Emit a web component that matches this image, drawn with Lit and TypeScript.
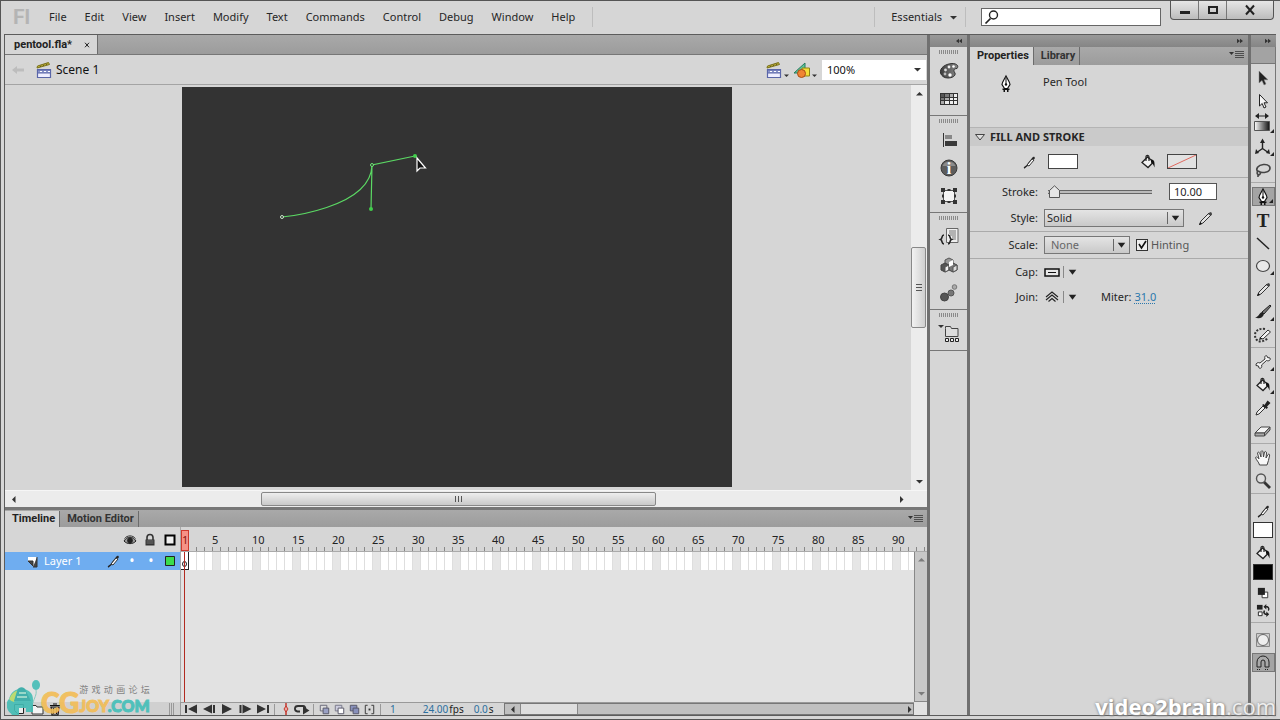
import { LitElement, html, svg, css, TemplateResult } from "lit";
import { customElement } from "lit/decorators.js";

type Shape = ReturnType<typeof svg>;

const PENCIL = svg`<path d="M2.5 14.5 4 11 12 3l2.5 1.5L6 13Z" fill="#e4e4e4" stroke="#333"/><path d="m11 4 3 2 1-3-1.5-1Z" fill="#444"/><path d="m2 15 1.5-3 1.5 2Z" fill="#111"/>`;
const THIN_PENCIL = svg`<path d="M3 14c2-1 4-3 5-5l4-5" fill="none" stroke="#222" stroke-width="1.4"/><path d="M6 11l5-6 2 1-5 6Z" fill="#fff" stroke="#222" stroke-width=".9"/><path d="m11 4 2-1.500 1 1.500-1 1.500Z" fill="#222"/>`;
const BUCKET = svg`<path d="M2 8.500 7.500 3l6 5-5.500 5.500Z" fill="#f2f2f2" stroke="#222" stroke-width="1.300"/><path d="M6 7V2.500C6 1 9 1 9 3v4" fill="none" stroke="#222" stroke-width="1.200"/><path d="M11 5.500c3-.5 4 3 3.500 8-1-2-1-4-3.500-5Z" fill="#111"/>`;
const NIB = svg`<path d="M8 0C6 4 4 6.500 4 8.500L6.500 12.500h3L12 8.500C12 6.500 10 4 8 0Z" fill="#fff" stroke="#111" stroke-width="1.200"/><path d="M8 2v6" stroke="#111"/><circle cx="8" cy="8.500" r="1.200" fill="#111"/><path d="M4.500 12.500h7V14h-1v2h-1.500v-2h-2v2H5.500v-2h-1Z" fill="#111"/>`;
const CLAP = svg`<path d="M1.500 7.500h13v8h-13Z" fill="#eef" stroke="#5a66a8" stroke-width="1.200"/><path d="M1.500 8h13v3h-13Z" fill="#8c96cc" stroke="#5a66a8"/><path d="m4 9.500h2m2 0h2m2 0h2" stroke="#fff"/><path d="m1 6 .5-2 11-3.500 1 2Z" fill="#c8b840" stroke="#77701a"/><path d="m4 5 1-1.500m2 .5 1-1.500m2 .5 1-1.500" stroke="#5d5710"/>`;

const ICONS: Record<string, Shape> = {
  pencil: PENCIL,
  thinPencil: THIN_PENCIL,
  bucket: BUCKET,
  nib: NIB,
  clap: CLAP,
  back: svg`<path d="m2 8 5-4v2.500h7v3H7V12Z" fill="#bdbdbd"/>`,
  symbols: svg`<path d="m0 11 11-10v10Z" fill="#5cc49c" stroke="#287a5c"/><path d="M8 6h7.500v8H8Z" fill="#f4de38" stroke="#8f8414"/><circle cx="7.500" cy="11.500" r="4" fill="#f08432" stroke="#a84c14"/>`,
  search: svg`<circle cx="9.500" cy="6" r="4" fill="none" stroke="#222" stroke-width="1.400"/><path d="m6.500 9.500-5 5" stroke="#222" stroke-width="1.700"/>`,
  palette: svg`<defs><linearGradient id="p"><stop offset="0" stop-color="#3c3c3c"/><stop offset="1" stop-color="#888"/></linearGradient></defs><path d="M-.5 10C-1.500 5 4 1 11 .5c5 0 7 2.500 5 5-3 0-4 2-2 4.500 1 3-3 5-7 5s-6.500-2-7.500-5Z" fill="url(#p)" stroke="#333"/><circle cx="4.500" cy="7" r="1.400" fill="#ddd"/><circle cx="8" cy="4" r="1.400" fill="#eee"/><circle cx="12.500" cy="3.500" r="1.300" fill="#fff"/><circle cx="4" cy="11" r="1.400" fill="#bbb"/><circle cx="9" cy="12" r="1.700" fill="#fff"/>`,
  swatches: svg`<path d="M-1 2h18v12H-1Z" fill="#333"/><path d="M0 3h3v3H0Z" fill="#555"/><path d="M4 3h4v3H4ZM0 7h3v2H0Z" fill="#777"/><path d="M9 3h3v3H9ZM4 7h4v2H4ZM0 10h3v3H0Z" fill="#aaa"/><path d="M13 3h3v3h-3ZM9 7h3v2H9ZM4 10h4v3H4ZM13 7h3v2h-3ZM9 10h3v3H9ZM13 10h3v3h-3Z" fill="#eee"/>`,
  align: svg`<path d="M2.500 1v14" stroke="#333"/><path d="M4 3h7v4H4Z" fill="#888"/><path d="M4 9h12v5H4Z" fill="#3a3a3a"/>`,
  info: svg`<circle cx="8" cy="8" r="8" fill="#5c5c5c" stroke="#3a3a3a"/><path d="M1.500 6a6.800 6 0 0 1 13 0Z" fill="#8b8b8b"/><text x="8" y="13.500" text-anchor="middle" font-family="Liberation Serif, serif" font-weight="bold" font-size="16" fill="#fff">i</text>`,
  transform: svg`<path d="M2.500 2.500h11v11h-11Z" fill="#f4f4f4" stroke="#555"/><path d="M0 0h4v4H0ZM12 0h4v4h-4ZM0 12h4v4H0ZM12 12h4v4h-4ZM6.500 1h3v2h-3ZM6.500 13h3v2h-3ZM1 6.500h2v3H1ZM13 6.500h2v3h-2Z" fill="#333"/>`,
  code: svg`<path d="M5.500-.5H17v14H5.500Z" fill="#eee" stroke="#666"/><path d="M8 2h7M8 4h7M9 6h6M11 8h4M11 10h4" stroke="#777"/><path d="M3 6C0 6 2 9.500-.5 10.500 2 11.500 0 15 3 15M7 6c3 0 1 3.500 3.500 4.500C8 11.500 10 15 7 15" fill="none" stroke="#222" stroke-width="1.600"/>`,
  components: svg`<path d="m4 3 4-2 4 2v5l-4 2-4-2Z" fill="#999" stroke="#555"/><path d="m0 8 4-2 4 2v5l-4 2-4-2Z" fill="#555" stroke="#444"/><path d="M4 10v5l4-2V8Z" fill="#f2f2f2" stroke="#555"/><path d="m8 8 4-2 4 2v5l-4 2-4-2Z" fill="#777" stroke="#444"/><path d="M12 10v5l4-2V8Z" fill="#ddd" stroke="#555"/><path d="M8 5v5l4-2V3Z" fill="#fff"/>`,
  motion: svg`<circle cx="3.500" cy="12" r="4" fill="#555" stroke="#444"/><circle cx="10" cy="8" r="3" fill="#777" stroke="#555"/><circle cx="13.500" cy="2" r="2.300" fill="#aaa" stroke="#777"/>`,
  project: svg`<path d="m-3-1h6L0 2Z" fill="#333"/><path d="M4.500 2.500V.5h5l1 2H17v8H4.500Z" fill="#ddd" stroke="#444"/><path d="M4.500 12.500h3v3h-3ZM9.500 12.500h3v3h-3ZM14.500 12.500h3v3h-3Z" fill="#eee" stroke="#222"/>`,
  select: svg`<path d="M4 1v12l3-2.500L9 15l2-1-2-4.200h4Z" fill="#222" stroke="#888" stroke-width=".5"/>`,
  subselect: svg`<path d="M4.500 1.500V13l2.700-2.500L9 15l2-1-2-4.200h3.500Z" fill="#f6f6f6" stroke="#222"/>`,
  gradient: svg`<defs><linearGradient id="g"><stop offset="0" stop-color="#fff"/><stop offset="1" stop-color="#111"/></linearGradient></defs><path d="M1 0h12" stroke="#222"/><path d="M4-3v6L0 0ZM10-3v6l4-3Z" fill="#222"/><path d="M-.5 5.500h15v9h-15Z" fill="url(#g)" stroke="#555"/>`,
  axes: svg`<path d="M7.500 10V3M7.500 9.500 2.500 13M7.500 9.500l5 3.500" stroke="#222" stroke-width="1.400"/><path d="M7.500-.5 5 4h5ZM0 15l1-5 3 4ZM15 15l-1-5-3 4Z" fill="#222"/>`,
  lasso: svg`<path d="M3 10C0 7 3 3 8.500 2.500S16 5 14.500 8 6 11 4 9.500s-2.500 2-1 3 3-1 2-2M3 12v3" fill="none" stroke="#444" stroke-width="1.600"/>`,
  text: svg`<text x="8" y="14.500" text-anchor="middle" font-family="Liberation Serif, serif" font-weight="bold" font-size="19" fill="#222">T</text>`,
  line: svg`<path d="m2 3 12 11" stroke="#222" stroke-width="1.500"/>`,
  oval: svg`<ellipse cx="8" cy="8" rx="6.500" ry="5.500" fill="#eaeaea" stroke="#444" stroke-width="1.200"/>`,
  brush: svg`<path d="M7 8 15 1l1 1-7 8Z" fill="#777" stroke="#222"/><path d="M9 10C8 14 4 15 0 13.500 4 13 4 9 7 8Z" fill="#222"/>`,
  deco: svg`<path d="M5 11 13 3l2.500 2-7.500 7Z" fill="#f4f4f4" stroke="#333"/><path d="m4 13 1-3 2.500 2Z" fill="#222"/><path d="M10 2C4 1 0 4 0 8s2 5 3 6c3 1 7 0 10-3" fill="none" stroke="#333" stroke-width="2" stroke-dasharray="2 1.500"/>`,
  bone: svg`<path d="M5 9 10 5c-1-3 1-4 2-3l.5 1.500L15 4c1 2-1 3.500-3.500 2.500l-5 4.500c1 2.500-1 4-2.500 3l-.5-2L1 11.500C.5 9 3 8 5 9Z" fill="#f4f4f4" stroke="#333"/>`,
  dropper: svg`<path d="m1 15 1-3 6-6 2 2-6 6Z" fill="#eee" stroke="#333"/><path d="m7 5 1.500-1 1 1 3-4.500 3 2.500L12 6.500l1 1L11.500 9Z" fill="#222"/>`,
  eraser: svg`<path d="m0 10 6-6h9l-5.500 6Z" fill="#f4f4f4" stroke="#444"/><path d="M0 10v3h9.500v-3ZM9.500 10v3L15 7V4Z" fill="#aaa" stroke="#444"/>`,
  hand: svg`<path d="M4.500 15C4 12 1 10 .5 7.500 1.500 6 3 8 4 9L2.500 3C3 1.500 4.500 2 5 4l1 3V1.500c.5-1 2-1 2 .5l.5 5 1-5c.5-1 2-.5 2 1L11 8l2-3.500c1-1 2 0 1.500 1.500C14 9 13 12 12 15Z" fill="#f8f8f8" stroke="#444"/>`,
  magnify: svg`<path d="m9 9 6 6" stroke="#333" stroke-width="2.800"/><circle cx="6" cy="5.500" r="4.500" fill="#ddd" stroke="#555" stroke-width="1.400"/>`,
  blackwhite: svg`<path d="M6.500 6.500h6v6h-6Z" fill="#fff" stroke="#333"/><path d="M2 2h7.500v7.500H2Z" fill="#222"/>`,
  swap: svg`<path d="M1 2h6v5H1Z" fill="#222"/><path d="M2.500 9.500h4v4h-4Z" fill="#fff" stroke="#222"/><path d="M9 4h3c2 1 2 3 1 4M13 12h-3c-2-1-2-2-1-4" fill="none" stroke="#222" stroke-width="1.500"/><path d="M11 1v6L8 4ZM11 9v6l3-3Z" fill="#222"/>`,
  objectDraw: svg`<path d="M1.500 1.500h13v13h-13Z" fill="#ccc" stroke="#888"/><circle cx="8" cy="8" r="5.500" fill="#eee" stroke="#666"/>`,
  magnet: svg`<path d="M2 12V7a6 6 0 0 1 12 0v5h-4V7a2 2 0 0 0-4 0v5Z" fill="#aaa" stroke="#222"/><path d="M2 14.500h4M10 14.500h4" stroke="#222" stroke-dasharray="1 1"/>`,
  eye: svg`<path d="M2 9C5 4 11 4 14 9 11 12.500 5 12.500 2 9Z" fill="#999" stroke="#222"/><circle cx="8" cy="8.500" r="2.800" fill="#222"/><path d="M2.500 6.500c3-3.500 8-3.500 11 0" fill="none" stroke="#333"/>`,
  lock: svg`<path d="M5 8V5.500a3 3 0 0 1 6 0V8" fill="none" stroke="#333" stroke-width="1.600"/><path d="M3.500 7.500h9v6h-9Z" fill="#333"/><path d="M4.500 9h7M4.500 11h7" stroke="#777"/>`,
  outline: svg`<path d="M3.500 3.500h9v9h-9Z" fill="#eee" stroke="#000" stroke-width="2"/>`,
  layer: svg`<path d="M4 4h9v9H9V8H4Z" fill="#fff"/><path d="M4 8h5v5ZM13 4v10H9" fill="#444" stroke="#333"/>`,
  green: svg`<path d="M3.500 3.500h9v9h-9Z" fill="#3bdc4b" stroke="#222"/>`,
  newLayer: svg`<path d="M3.500 3.500h9v9h-6l-3-3Z" fill="#eee" stroke="#222"/>`,
  folder: svg`<path d="M3 4.500h4l1 1.500h6v7H3Z" fill="#f4f4f4" stroke="#333"/>`,
  trash: svg`<path d="M4 6h8l-1 8H5ZM3 4.500h10M6 3h4" fill="#aaa" stroke="#111" stroke-width="1.200"/><path d="M6.500 7v6M9.500 7v6" stroke="#111"/>`,
  first: svg`<path d="M3 4v8" stroke="#333" stroke-width="2"/><path d="M14 3.500v9L5 8Z" fill="#333"/>`,
  prev: svg`<path d="M13 4v8" stroke="#333" stroke-width="2"/><path d="M11 3.500v9L2 8Z" fill="#333"/>`,
  play: svg`<path d="M3 3v10l10-5Z" fill="#333"/>`,
  next: svg`<path d="M3.500 4v8" stroke="#333" stroke-width="2"/><path d="M5.500 3.500v9l9-4.500Z" fill="#333"/>`,
  last: svg`<path d="M13 4v8" stroke="#333" stroke-width="2"/><path d="M2 3.500v9L11 8Z" fill="#333"/>`,
  center: svg`<path d="M8 2v12" stroke="#c3352b" stroke-width="1.500"/><path d="m8 5 2 3-2 3-2-3Z" fill="#e9a59f" stroke="#c3352b"/>`,
  loop: svg`<path d="M6 10.500H3.500C0 10 0 5 4 5h5c2 0 2.500 2 2.500 4" fill="none" stroke="#333" stroke-width="1.800"/><path d="M9 5.500v8l6.500-4Z" fill="#333"/>`,
  onion: svg`<path d="M3.500 3.500h7v6h-7Z" fill="#ddd" stroke="#667"/><path d="M6.500 6.500h6v6h-6Z" fill="#99a0c4" stroke="#556"/>`,
  onionOutline: svg`<path d="M3.500 3.500h7v6h-7Z" fill="#ccd" stroke="#778"/><path d="M6.500 6.500h6v6h-6Z" fill="#fff" stroke="#556"/>`,
  multi: svg`<path d="M3.500 3.500h7v6h-7Z" fill="#8890bb" stroke="#556"/><path d="M6.500 6.500h6v6h-6Z" fill="#8890bb" stroke="#556"/>`,
  markers: svg`<path d="M6 3.500H3.500v9H6M10 3.500h2.500v9H10" fill="none" stroke="#333"/><path d="M7 8h2" stroke="#333" stroke-width="2"/>`,
  cap: svg`<path d="M1 5h14v7H1Z" fill="#e8e8e8" stroke="#111" stroke-width="1.500"/><path d="M4 8.500h8" stroke="#111"/>`,
  join: svg`<path d="m2 8 6-5 6 5M2 11l6-5 6 5M4.500 12.500 8 9.500l3.500 3" fill="none" stroke="#222" stroke-width="1.100"/>`,
  down: svg`<path d="M3 5h10l-5 6.500Z" fill="#222"/>`,
  menu: svg`<path d="M0 5h5L2.500 8Z" fill="#333"/><path d="M6 4.500h9M6 6.500h9M6 8.500h9M6 10.500h9" stroke="#444" stroke-width=".9"/>`,
  toLeft: svg`<path d="M8 5v6L4 8ZM12 5v6L8 8Z" fill="#333"/>`,
  toRight: svg`<path d="M4 5v6l4-3ZM8 5v6l4-3Z" fill="#333"/>`,
  minimize: svg`<path d="M3 9h10v3H3Z" fill="#222"/>`,
  maximize: svg`<path d="M4 5h8v6H4Z" fill="none" stroke="#222" stroke-width="2"/>`,
  close: svg`<path d="m4 3.500 8 9M12 3.500l-8 9" stroke="#222" stroke-width="2"/>`,
};

const icon = (name: string, size = 16): TemplateResult =>
  html`<svg width=${size} height=${size} viewBox="0 0 16 16" overflow="visible" aria-hidden="true">${ICONS[name]}</svg>`;

const arrow = (d: string) => html`<svg width="7" height="7" viewBox="0 0 7 7" aria-hidden="true"><path d=${d} fill="#333" /></svg>`;
const UP = "M0 5.500h7L3.500 2Z";
const DOWN = "M0 2h7L3.500 5.500Z";
const LEFT = "M5.500 0v7L2 3.500Z";
const RIGHT = "M2 0v7l3.500-3.500Z";

const base = css`
  :host { box-sizing: border-box; font: 11px/16px "Noto Sans", "Open Sans", sans-serif; color: #262626; }
  *, *::before, *::after { box-sizing: border-box; }
  svg { display: block; flex: none; }
  button { font: inherit; color: inherit; border: 0; padding: 0; background: none; display: inline-flex; align-items: center; justify-content: center; white-space: nowrap; }
  input, select { font: inherit; color: inherit; margin: 0; border-radius: 0; }
  .tabs { display: flex; background: linear-gradient(#a9a9a9, #9c9c9c); }
  .tab { font: bold 11px/16px Roboto, sans-serif; color: #333; padding: 0 4px 0 7px; border-right: 1px solid #6c6c6c; }
  .tab.on { background: #d6d6d6; color: #222; }
  .spacer { flex: 1; }
`;

@customElement("menu-bar")
class MenuBar extends LitElement {
  static styles = [base, css`
    :host { display: flex; align-items: center; height: 34px; padding-left: 9px; }
    .logo { font: bold 21px/24px Roboto, sans-serif; color: #b4b4b4; width: 27px; }
    nav { display: flex; align-items: center; margin-right: 8px; }
    .item { padding: 0 9px; }
    .rule { width: 1px; height: 20px; background: #bdbdbd; }
    .space { gap: 8px; margin: 0 8px 0 16px; }
    .search { display: flex; align-items: center; width: 180px; height: 18px; margin: 0 9px 0 15px; border: 1px solid #666; background: #fff; padding-left: 2px; }
    .search input { border: 0; outline: 0; background: none; flex: 1; min-width: 0; }
    .window { display: flex; align-self: flex-start; margin-right: 2px; height: 20px; border: 1px solid #555; border-top: 0; border-radius: 0 0 4px 4px; background: linear-gradient(#e8e8e8, #bcbcbc); }
    .window button { width: 28px; border-right: 1px solid #777; }
    .window .close { width: 46px; border: 0; }
  `];
  render() {
    return html`
      <span class="logo">Fl</span>
      <nav>${["File", "Edit", "View", "Insert", "Modify", "Text", "Commands", "Control", "Debug", "Window", "Help"].map((m) => html`<button class="item">${m}</button>`)}</nav>
      <span class="rule"></span><span class="spacer"></span><span class="rule"></span>
      <button class="space">Essentials ${arrow(DOWN)}</button><span class="rule"></span>
      <label class="search">${icon("search")}<input type="text" aria-label="Search" /></label>
      <div class="window">
        <button aria-label="Minimize">${icon("minimize")}</button>
        <button aria-label="Maximize">${icon("maximize")}</button>
        <button class="close" aria-label="Close">${icon("close")}</button>
      </div>`;
  }
}

@customElement("stage-view")
class StageView extends LitElement {
  static styles = [base, css`
    :host { display: flex; flex-direction: column; min-height: 0; }
    .tabs { flex: none; height: 20px; border-bottom: 1px solid #777; }
    .tab { display: flex; gap: 11px; align-items: center; padding: 0 6px 0 9px; }
    .tab svg { width: 8px; }
    .edit { flex: none; display: flex; align-items: center; height: 30px; padding-left: 5px; border-bottom: 1px solid #a4a4a4; }
    .scene { display: flex; gap: 4px; align-items: center; margin-left: 10px; font-size: 12px; color: #111; }
    .pop { gap: 2px; margin-right: 5px; align-items: flex-end; }
    .pop svg + svg { width: 5px; height: 5px; }
    .zoom { display: flex; align-items: center; width: 104px; height: 20px; background: #fff; margin-right: 1px; padding-right: 5px; }
    .zoom select { appearance: none; border: 0; background: none; flex: 1; padding-left: 5px; color: #111; outline: 0; }
    .area { flex: 1; min-height: 0; display: grid; grid-template-columns: minmax(0, 1fr) 16px; grid-template-rows: minmax(0, 1fr) 17px; }
    .canvas { display: flex; justify-content: center; align-items: center; overflow: hidden; padding: 0 2px 2px 0; }
    .canvas svg { background: #333; }
    .vbar, .hbar { display: flex; align-items: center; background: #ececec; }
    .vbar { flex-direction: column; padding: 5px 0; }
    .hbar { grid-column: 1 / 3; padding: 0 22px 0 5px; border-top: 1px solid #f6f6f6; }
    .track { flex: 1; display: flex; align-self: stretch; }
    .vbar .track { flex-direction: column; }
    .before, .after { flex: 150 1 0; }
    .hbar .before { flex-grow: 244; } .hbar .after { flex-grow: 242; }
    .thumb { display: flex; align-items: center; justify-content: center; border: 1px solid #888; border-radius: 2px; background: linear-gradient(90deg, #f2f2f2, #cfcfcf); }
    .vbar .thumb { flex: 80 1 0; margin: 0 1px 0 0; }
    .hbar .thumb { flex: 394 1 0; margin: 1px 0; background: linear-gradient(#eee, #c9c9c9); }
  `];
  render() {
    return html`
      <div class="tabs"><button class="tab on">pentool.fla* ${icon("close")}</button></div>
      <div class="edit">
        <button aria-label="Back">${icon("back")}</button>
        <span class="scene">${icon("clap")}Scene 1</span><span class="spacer"></span>
        <button class="pop" aria-label="Edit scene">${icon("clap")}${arrow(DOWN)}</button>
        <button class="pop" aria-label="Edit symbols">${icon("symbols")}${arrow(DOWN)}</button>
        <label class="zoom"><select aria-label="Zoom"><option>100%</option></select>${arrow(DOWN)}</label>
      </div>
      <div class="area">
        <div class="canvas">
          <svg width="550" height="400" viewBox="0 0 550 400" role="img" aria-label="Stage">
            <path d="M100 130C100 130 189 122 190 78M189 122l1-44 43-9" fill="none" stroke="#5bd964" stroke-width="1.200" />
            <circle cx="189" cy="122" r="2" fill="#41cf4c" /><circle cx="233" cy="69" r="2" fill="#41cf4c" />
            <circle cx="100" cy="130" r="1.500" fill="#333" stroke="#c8e6c8" /><circle cx="190" cy="78" r="1.500" fill="#333" stroke="#6ee676" />
            <path d="M235 71v13l3-3h5.500Z" fill="#111" stroke="#fff" stroke-width="1.200" />
          </svg>
        </div>
        <div class="vbar">${arrow(UP)}<div class="track"><span class="before"></span><span class="thumb"><svg width="6" height="7"><path d="M0 .5h6M0 3.500h6M0 6.500h6" stroke="#555" /></svg></span><span class="after"></span></div>${arrow(DOWN)}</div>
        <div class="hbar">${arrow(LEFT)}<div class="track"><span class="before"></span><span class="thumb"><svg width="9" height="6"><path d="M1.500 0v6M4.500 0v6M7.500 0v6" stroke="#555" /></svg></span><span class="after"></span></div>${arrow(RIGHT)}</div>
      </div>`;
  }
}

@customElement("time-line")
class TimeLine extends LitElement {
  static styles = [base, css`
    :host { display: grid; grid-template-rows: 17px 25px 150px 13px; grid-template-columns: 175px minmax(0, 1fr) 13px; border-top: 3px solid #777; background: #e2e2e2; }
    .tabs { grid-column: 1 / 4; align-items: center; }
    .tabs > svg { margin-right: 3px; }
    .heads { display: flex; align-items: center; justify-content: flex-end; gap: 4px; padding-right: 2px; background: #d6d6d6; }
    .ruler { grid-column: 2 / 4; display: flex; overflow: hidden; background: #d6d6d6; border-bottom: 1px solid #aaa; border-left: 1px solid #aaa; }
    .mark { flex: none; width: 40px; padding-top: 5px; color: #222; background: repeating-linear-gradient(90deg, #888 0 1px, transparent 1px 8px) bottom / 100% 4px no-repeat; }
    .mark.one { width: 31px; padding: 0; background-image: repeating-linear-gradient(90deg, transparent 0 7px, #888 7px 8px); }
    .mark.one span { display: block; width: 8px; height: 21px; margin-top: 3px; padding: 1px 0; color: #8a1410; border: 1px solid #cf392c; background: #f69286; }
    .layer { display: flex; align-items: center; height: 18px; background: #6fadf0; color: #fff; padding: 0 2px 0 19px; gap: 3px; }
    .layer .name { flex: 1; padding-left: 1px; }
    .dot { width: 16px; text-align: center; font-size: 14px; }
    .rows { position: relative; border-left: 1px solid #aaa; overflow: hidden; }
    .frames { display: flex; height: 18px; overflow: hidden; }
    .frame { flex: none; width: 8px; background: #fff; border-right: 1px solid #dedede; }
    .frame.fifth { background: #e6e6e6; }
    .key { display: flex; align-items: flex-end; justify-content: center; padding-bottom: 2px; border: solid #222; border-width: 0 1px 1px 0; }
    .head { position: absolute; left: 3px; top: 0; bottom: 0; width: 1px; background: #b22a20; }
    .scroll { display: flex; flex-direction: column; justify-content: space-between; align-items: center; padding: 4px 0; background: #c8c8c8; border: solid #888; border-width: 0 0 1px 1px; }
    .scroll svg { opacity: .5; }
    .tools { display: flex; align-items: center; background: #d0d0d0; padding: 0 5px 0 6px; gap: 2px; }
    .grip { width: 6px; height: 12px; background: repeating-linear-gradient(90deg, #999 0 1px, transparent 1px 2px); }
    .controls { grid-column: 2 / 3; display: flex; align-items: center; background: #d6d6d6; border: solid #999; border-width: 1px 0 0 1px; padding-left: 2px; gap: 3px; overflow: hidden; }
    .icons { display: flex; }
    .play { gap: 2px; }
    .rule { width: 1px; height: 11px; background: #999; }
    .value { font-size: 10px; line-height: 12px; color: #2b6f9f; text-decoration: underline dotted; text-underline-offset: 2px; }
    .unit { font-size: 10px; color: #222; margin-left: -2px; }
    .first { margin-left: 6px; } .rate { margin-left: 24px; } .time { margin-left: 7px; }
    .hscroll { flex: 1; display: flex; align-items: center; align-self: stretch; margin-left: 7px; border: 1px solid #777; background: #c0c0c0; padding-left: 4px; gap: 4px; }
    .thumb { align-self: stretch; width: 58px; background: #dedede; border: solid #888; border-width: 0 1px; margin-right: auto; }
  `];
  render() {
    const marks = Array.from({ length: 18 }, (_, i) => (i + 1) * 5);
    return html`
      <div class="tabs"><button class="tab on">Timeline</button><button class="tab">Motion Editor</button><span class="spacer"></span>${icon("menu")}</div>
      <div class="heads">${icon("eye")}${icon("lock")}${icon("outline")}</div>
      <div class="ruler"><div class="mark one"><span>1</span></div>${marks.map((n) => html`<div class="mark">${n}</div>`)}</div>
      <div><div class="layer">${icon("layer")}<span class="name">Layer 1</span>${icon("thinPencil")}<span class="dot">•</span><span class="dot">•</span>${icon("green")}</div></div>
      <div class="rows">
        <div class="frames">
          <span class="frame key"><svg width="5" height="6"><ellipse cx="2.500" cy="3" rx="2" ry="2.500" fill="#fff" stroke="#222" /></svg></span>
          ${Array.from({ length: 180 }, (_, i) => html`<span class="frame ${(i + 2) % 5 === 0 ? "fifth" : ""}"></span>`)}
        </div>
        <span class="head"></span>
      </div>
      <div class="scroll">${arrow(UP)}${arrow(DOWN)}</div>
      <div class="tools">
        <button aria-label="New layer">${icon("newLayer")}</button><button aria-label="New folder">${icon("folder")}</button><button aria-label="Delete">${icon("trash")}</button>
        <span class="spacer"></span><span class="grip"></span>
      </div>
      <div class="controls">
        <div class="icons play">${["first", "prev", "play", "next", "last"].map((n) => html`<button aria-label=${n}>${icon(n)}</button>`)}</div>
        <span class="rule"></span>
        <div class="icons">${["center", "loop"].map((n) => html`<button aria-label=${n}>${icon(n)}</button>`)}</div>
        <span class="rule"></span>
        <div class="icons">${["onion", "onionOutline", "multi", "markers"].map((n) => html`<button aria-label=${n}>${icon(n, 15)}</button>`)}</div>
        <span class="rule"></span>
        <a class="value first" href="#frame">1</a>
        <a class="value rate" href="#rate">24.00</a><span class="unit">fps</span>
        <a class="value time" href="#time">0.0</a><span class="unit">s</span>
        <div class="hscroll">${arrow(LEFT)}<span class="thumb"></span>${arrow(RIGHT)}</div>
      </div>`;
  }
}

@customElement("icon-dock")
class IconDock extends LitElement {
  static styles = [base, css`
    :host { display: flex; flex-direction: column; }
    .group { display: flex; flex-direction: column; align-items: center; padding: 3px 0 2px; border-bottom: 1px solid #777; }
    .grip { width: 19px; height: 4px; margin-bottom: 3px; background: repeating-linear-gradient(90deg, #8a8a8a 0 1px, transparent 1px 2px); }
    button { width: 28px; height: 28px; }
  `];
  render() {
    const groups = [["palette", "swatches"], ["align", "info", "transform"], ["code", "components", "motion"], ["project"]];
    return groups.map((g) => html`<div class="group"><span class="grip"></span>${g.map((n) => html`<button aria-label=${n}>${icon(n)}</button>`)}</div>`);
  }
}

@customElement("property-panel")
class PropertyPanel extends LitElement {
  static styles = [base, css`
    :host { display: flex; flex-direction: column; }
    .tabs { height: 18px; align-items: stretch; }
    .tabs > svg { margin-right: 3px; }
    .title { display: flex; align-items: flex-start; height: 62px; padding: 9px 0 0 28px; gap: 29px; }
    .title svg { margin-top: 2px; }
    h2 { display: flex; align-items: center; gap: 5px; margin: 0; height: 19px; padding: 0 5px; border-top: 1px solid #b4b4b4; background: #cacaca; font: bold 11px/16px "Noto Sans", sans-serif; }
    .row { display: flex; align-items: center; height: 27px; padding-left: 74px; }
    .row > .name { width: 74px; margin-left: -74px; padding-right: 6px; text-align: right; }
    .line { border-bottom: 1px solid #aaa; }
    .swatches { height: 32px; padding-left: 51px; }
    .short { height: 25px; }
    .swatch { width: 30px; height: 15px; border: 1px solid #444; background: #fff; margin: 0 62px 0 11px; }
    .swatch.none { background: #e2e2e2; margin-right: 0; }
    input[type="range"] { appearance: none; width: 104px; height: 16px; margin-left: 4px; background: linear-gradient(#666 0 1px, #bbb 1px 3px, #666 3px 4px) center / 100% 4px no-repeat; }
    input[type="range"]::-webkit-slider-thumb { appearance: none; width: 13px; height: 14px; background: url("data:image/svg+xml,%3Csvg xmlns='http://www.w3.org/2000/svg' width='13' height='14'%3E%3Cpath d='M1.500 12.500V5.500L6.500 .8l5 4.700v7Z' fill='%23e6e6e6' stroke='%23555'/%3E%3C/svg%3E") no-repeat; }
    .number { width: 48px; height: 17px; margin-left: 17px; border: 1px solid #555; background: #fff; padding: 0 4px; }
    .drop { display: flex; align-items: center; height: 18px; border: 1px solid #777; background: linear-gradient(#e4e4e4, #c9c9c9); }
    .drop select { appearance: none; flex: 1; border: 0; background: none; padding: 0 0 0 2px; outline: 0; }
    .drop svg { border-left: 1px solid #666; height: 12px; }
    .style { width: 140px; margin-right: 13px; }
    .scale { width: 86px; color: #666; } .scale select { padding-left: 6px; }
    .check { display: flex; align-items: center; gap: 3px; margin-left: 6px; color: #555; }
    .check input { appearance: none; width: 12px; height: 12px; border: 1px solid #333; background: #eee url("data:image/svg+xml,%3Csvg xmlns='http://www.w3.org/2000/svg' viewBox='0 0 10 10'%3E%3Cpath d='m2 4 2.500 4L9 1' fill='none' stroke='%23111' stroke-width='1.600'/%3E%3C/svg%3E"); }
    .mini { gap: 3px; } .mini svg + svg { border-left: 1px solid #888; height: 12px; width: 18px; }
    .miter { margin-left: 20px; }
    .value { color: #2b78ad; margin-left: 3px; text-decoration: underline dotted; text-underline-offset: 2px; }
  `];
  render() {
    return html`
      <div class="tabs"><button class="tab on">Properties</button><button class="tab">Library</button><span class="spacer"></span>${icon("menu")}</div>
      <div class="title">${icon("nib")}<span>Pen Tool</span></div>
      <h2><svg width="10" height="8"><path d="M.5 1.500h9L5 7Z" fill="#ddd" stroke="#444" /></svg>FILL AND STROKE</h2>
      <div class="row swatches line">
        ${icon("thinPencil")}<button class="swatch" aria-label="Stroke colour"></button>
        ${icon("bucket")}<button class="swatch none" aria-label="Fill colour"><svg width="28" height="13"><path d="M0 13 28 0" stroke="#e06a60" /></svg></button>
      </div>
      <div class="row"><label class="name" for="stroke">Stroke:</label><input id="stroke" type="range" min="0" max="100" value="0" /><input class="number" type="text" value="10.00" aria-label="Stroke size" /></div>
      <div class="row line"><label class="name" for="style">Style:</label><span class="drop style"><select id="style"><option>Solid</option></select>${icon("down")}</span><button aria-label="Edit style">${icon("pencil")}</button></div>
      <div class="row line"><label class="name" for="scale">Scale:</label><span class="drop scale"><select id="scale"><option>None</option></select>${icon("down")}</span><label class="check"><input type="checkbox" checked />Hinting</label></div>
      <div class="row short"><span class="name">Cap:</span><button class="mini" aria-label="Cap">${icon("cap")}${icon("down")}</button></div>
      <div class="row short"><span class="name">Join:</span><button class="mini" aria-label="Join">${icon("join")}${icon("down")}</button><span class="miter">Miter:</span><a class="value" href="#miter">31.0</a></div>`;
  }
}

@customElement("tool-box")
class ToolBox extends LitElement {
  static styles = [base, css`
    :host { display: flex; flex-direction: column; border-right: 1px solid #777; }
    .cap { height: 17px; background: #a3a3a3; border-bottom: 1px solid #777; margin-bottom: 2px; }
    .group { display: flex; flex-direction: column; align-items: center; padding-bottom: 1px; margin-bottom: 2px; border-bottom: 1px solid #aaa; }
    .tool { position: relative; width: 23px; height: 23px; }
    .tool.on { height: 19px; margin: 2px 0; background: #a4a4a4; border: 1px solid #777; }
    .more::after { content: ""; position: absolute; right: 1px; bottom: 2px; border: 2px solid; border-color: transparent #222 #222 transparent; }
    .paint { padding: 5px 0 3px; }
    .paint .tool { height: 19px; }
    .colour { width: 20px; height: 16px; border: 1px solid #333; margin: 2px 0 5px; background: #fff; }
    .colour.fill { background: #000; }
    .paint .small { height: 17px; }
    .last { border: 0; padding-top: 3px; }
  `];
  tool(name: string, more = false, on = false) {
    return html`<button class="tool ${more ? "more" : ""} ${on ? "on" : ""}" aria-label=${name}>${icon(name)}</button>`;
  }
  render() {
    return html`
      <div class="cap"></div>
      <div class="group">${this.tool("select")}${this.tool("subselect")}${this.tool("gradient", true)}${this.tool("axes", true)}${this.tool("lasso")}</div>
      <div class="group">${this.tool("nib", true, true)}${this.tool("text")}${this.tool("line")}${this.tool("oval", true)}${this.tool("pencil")}${this.tool("brush", true)}${this.tool("deco")}</div>
      <div class="group">${this.tool("bone", true)}${this.tool("bucket", true)}${this.tool("dropper")}${this.tool("eraser")}</div>
      <div class="group">${this.tool("hand")}${this.tool("magnify")}</div>
      <div class="group paint">
        ${this.tool("thinPencil")}<button class="colour" aria-label="Stroke colour"></button>
        ${this.tool("bucket")}<button class="colour fill" aria-label="Fill colour"></button>
        <button class="tool small" aria-label="Black and white">${icon("blackwhite", 15)}</button><button class="tool small" aria-label="Swap">${icon("swap", 15)}</button>
      </div>
      <div class="group last">${this.tool("objectDraw")}${this.tool("magnet", false, true)}</div>`;
  }
}

@customElement("app-root")
class AppRoot extends LitElement {
  static styles = [base, css`
    :host { display: flex; flex-direction: column; position: relative; height: 100vh; overflow: hidden; background: #d6d6d6; border: 1px solid #555; border-width: 1px 0 1px 1px; padding: 0 4px 3px 3px; }
    menu-bar { flex: none; margin-top: -1px; }
    .work { flex: 1; min-height: 0; display: grid; grid-template-rows: minmax(0, 1fr); grid-template-columns: minmax(0, 1fr) 37px 278px 25px; gap: 0 3px; background: #707070; border: solid #5c5c5c; border-width: 1px 0 1px 1px; }
    .column { display: flex; flex-direction: column; min-width: 0; min-height: 0; }
    .panel { flex: 1; background: #d6d6d6; }
    time-line { flex: none; }
    .strip { display: flex; align-items: center; justify-content: flex-end; height: 12px; background: linear-gradient(#999, #858585); }
    .strip svg { height: 12px; }
    .brand { position: absolute; right: 4px; bottom: 0; font: 22px/26px "Open Sans", sans-serif; color: #eee; text-shadow: 0 0 3px #888, 1px 1px 2px #888; }
    .brand b { color: #fff; }
    .forum { position: absolute; left: 6px; bottom: 3px; display: flex; align-items: flex-end; opacity: .9; }
    .cg { font: 900 28px/28px Lato, sans-serif; color: #f3bd55; -webkit-text-stroke: 1px #f3bd55; }
    .site { display: flex; flex-direction: column; }
    .cjk { display: flex; justify-content: space-between; font: 9px/12px "Noto Sans CJK SC", sans-serif; color: #777; }
    .joy { font: 900 16px/20px Lato, sans-serif; color: #f3bd55; -webkit-text-stroke: 1px #f3bd55; }
    .joy span { color: #42bfb8; -webkit-text-stroke-color: #42bfb8; }
  `];
  render() {
    return html`
      <menu-bar></menu-bar>
      <div class="work">
        <div class="column"><stage-view class="panel"></stage-view><time-line></time-line></div>
        <div class="column"><div class="strip">${icon("toLeft")}</div><icon-dock class="panel"></icon-dock></div>
        <div class="column"><div class="strip">${icon("toRight")}</div><property-panel class="panel"></property-panel></div>
        <div class="column"><div class="strip">${icon("toRight")}</div><tool-box class="panel"></tool-box></div>
      </div>
      <div class="forum">
        <svg width="34" height="36" viewBox="0 0 34 36" aria-hidden="true">
          <path d="M2 31V20C3 12 9 9 14 9c8 0 12 4 12 11v12h-7v-4h-7v7H5Z" fill="#43bdb5" /><path d="M2 20c2-6 5-9 10-10L7 22Z" fill="#b9da65" />
          <path d="M10 11c1-5 8-5 9 0l5 10H7Z" fill="#31aaa6" /><path d="M12 13h7M10 17h10" stroke="#91d8c7" stroke-width="2" />
          <path d="M3 20c-4 4-1 11 2 12" fill="none" stroke="#43bdb5" stroke-width="3" /><ellipse cx="29" cy="5" rx="4" ry="5" fill="#45bdb7" /><path d="M29 10c1 5-2 8-3 13" fill="none" stroke="#7ec8bd" />
        </svg>
        <span class="cg">CG</span>
        <span class="site"><span class="cjk">${[..."游戏动画论坛"].map((c) => html`<span>${c}</span>`)}</span><span class="joy">JOY<span>.COM</span></span></span>
      </div>
      <div class="brand"><b>video2brain</b>.com</div>`;
  }
}
